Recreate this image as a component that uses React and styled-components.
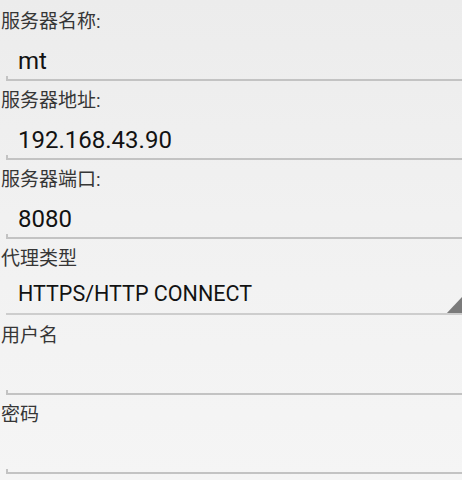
import React from 'react';
import styled, { createGlobalStyle } from 'styled-components';

const GlobalStyle = createGlobalStyle`
  html, body {
    margin: 0;
    padding: 0;
  }
  body {
    width: 462px;
    height: 480px;
    overflow: hidden;
    font-family: Roboto, "Noto Sans CJK SC", sans-serif;
    background: linear-gradient(180deg, #ececec 0%, #f1f1f1 45%, #f5f5f5 100%);
  }
`;

const Form = styled.div`
  display: flex;
  flex-direction: column;
  width: 462px;
  height: 480px;
  padding-top: 2px;
  box-sizing: border-box;
`;

const Label = styled.div`
  padding: 9px 0 0 1px;
  height: 22px;
  line-height: 22px;
  font-size: 19px;
  color: #363636;
  white-space: nowrap;
`;

const Field = styled.div`
  position: relative;
  height: ${p => p.$height || 48}px;
  display: flex;
  align-items: center;
  padding: 0 0 0 18px;
  font-size: ${p => p.$size || 24}px;
  color: #121212;
  white-space: nowrap;

  &::after {
    content: '';
    position: absolute;
    left: 6px;
    right: 0;
    bottom: ${p => p.$lineBottom || 0}px;
    height: 2px;
    background: ${p => p.$lineColor || '#c3c3c3'};
  }

  &::before {
    content: '';
    position: absolute;
    left: 6px;
    bottom: 0;
    width: 2px;
    height: ${p => (p.$tick === false ? 0 : 5)}px;
    background: #c3c3c3;
  }
`;

const Value = styled.span`
  margin-top: ${p => p.$offset || 0}px;
`;

const Arrow = styled.svg`
  position: absolute;
  right: 0;
  bottom: 2px;
`;

const TextInput = ({ label, value }) => (
  <>
    <Label>{label}</Label>
    <Field>
      <Value $offset={7}>{value}</Value>
    </Field>
  </>
);

const Spinner = ({ label, value }) => (
  <>
    <Label>{label}</Label>
    <Field $size={21.5} $height={46} $tick={false} $lineColor="#cdcdcd" $lineBottom={1}>
      <Value $offset={1}>{value}</Value>
      <Arrow width="16" height="17" viewBox="0 0 16 17">
        <polygon points="16,0 16,17 0,17" fill="#7b7b7b" />
      </Arrow>
    </Field>
  </>
);

export default function App() {
  return (
    <>
      <GlobalStyle />
      <Form>
        <TextInput label="服务器名称:" value="mt" />
        <TextInput label="服务器地址:" value="192.168.43.90" />
        <TextInput label="服务器端口:" value="8080" />
        <Spinner label="代理类型" value="HTTPS/HTTP CONNECT" />
        <TextInput label="用户名" value="" />
        <TextInput label="密码" value="" />
      </Form>
    </>
  );
}
